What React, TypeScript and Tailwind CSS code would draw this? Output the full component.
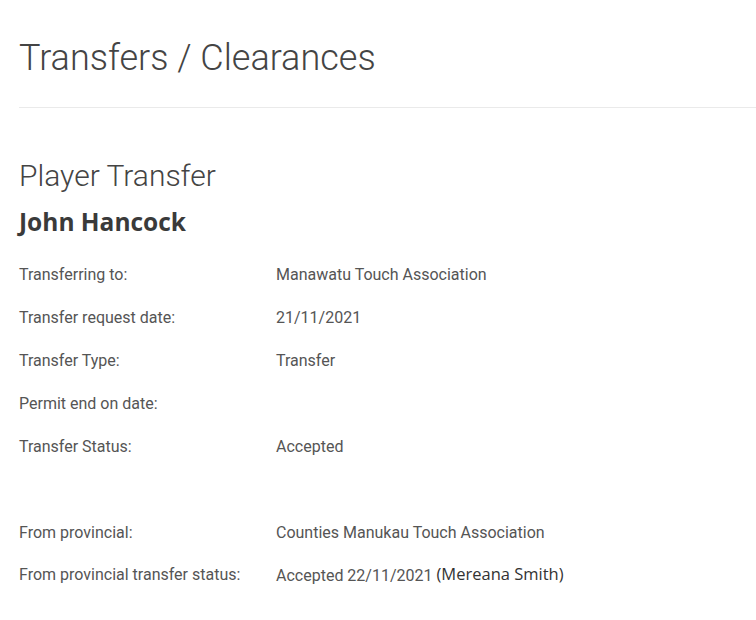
import React from "react";

const rows1: [string, string][] = [
  ["Transferring to:", "Manawatu Touch Association"],
  ["Transfer request date:", "21/11/2021"],
  ["Transfer Type:", "Transfer"],
  ["Permit end on date:", ""],
  ["Transfer Status:", "Accepted"],
];

function Row({ label, children, h = "h-[43px]" }: { label: string; children?: React.ReactNode; h?: string }) {
  return (
    <div className={`flex ${h} text-[16px] leading-[24px] text-[#555]`}>
      <div className="w-[257px] shrink-0">{label}</div>
      <div className="flex-1">{children}</div>
    </div>
  );
}

export default function App() {
  return (
    <div
      className="min-h-[620px] w-[756px] overflow-hidden bg-white pl-[19px]"
      style={{ fontFamily: "Roboto, 'Liberation Sans', sans-serif" }}
    >
      <div className="w-[800px] border-b border-[#eaeaea] pt-[39px] pb-[28px]">
        <h1 className="text-[36px] font-light leading-[1.1] text-[#444]">Transfers / Clearances</h1>
      </div>
      <h2 className="mt-[51px] text-[30px] font-light leading-[1.1] text-[#444]">Player Transfer</h2>
      <h3
        className="mt-[15px] text-[24.5px] font-bold leading-[1.2] text-[#3a3a3a]"
        style={{ fontFamily: "'Open Sans', sans-serif" }}
      >
        John Hancock
      </h3>
      <div className="mt-[27px]">
        {rows1.map(([l, v]) => (
          <Row key={l} label={l}>
            {v}
          </Row>
        ))}
        <div className="h-[43px]" />
        <Row label="From provincial:" h="h-[42px]">
          Counties Manukau Touch Association
        </Row>
        <Row label="From provincial transfer status:">
          Accepted 22/11/2021{" "}
          <span
            className="relative top-[-1px] text-[16.5px] text-[#333]"
            style={{ fontFamily: "'Open Sans', sans-serif" }}
          >
            (Mereana Smith)
          </span>
        </Row>
      </div>
    </div>
  );
}
